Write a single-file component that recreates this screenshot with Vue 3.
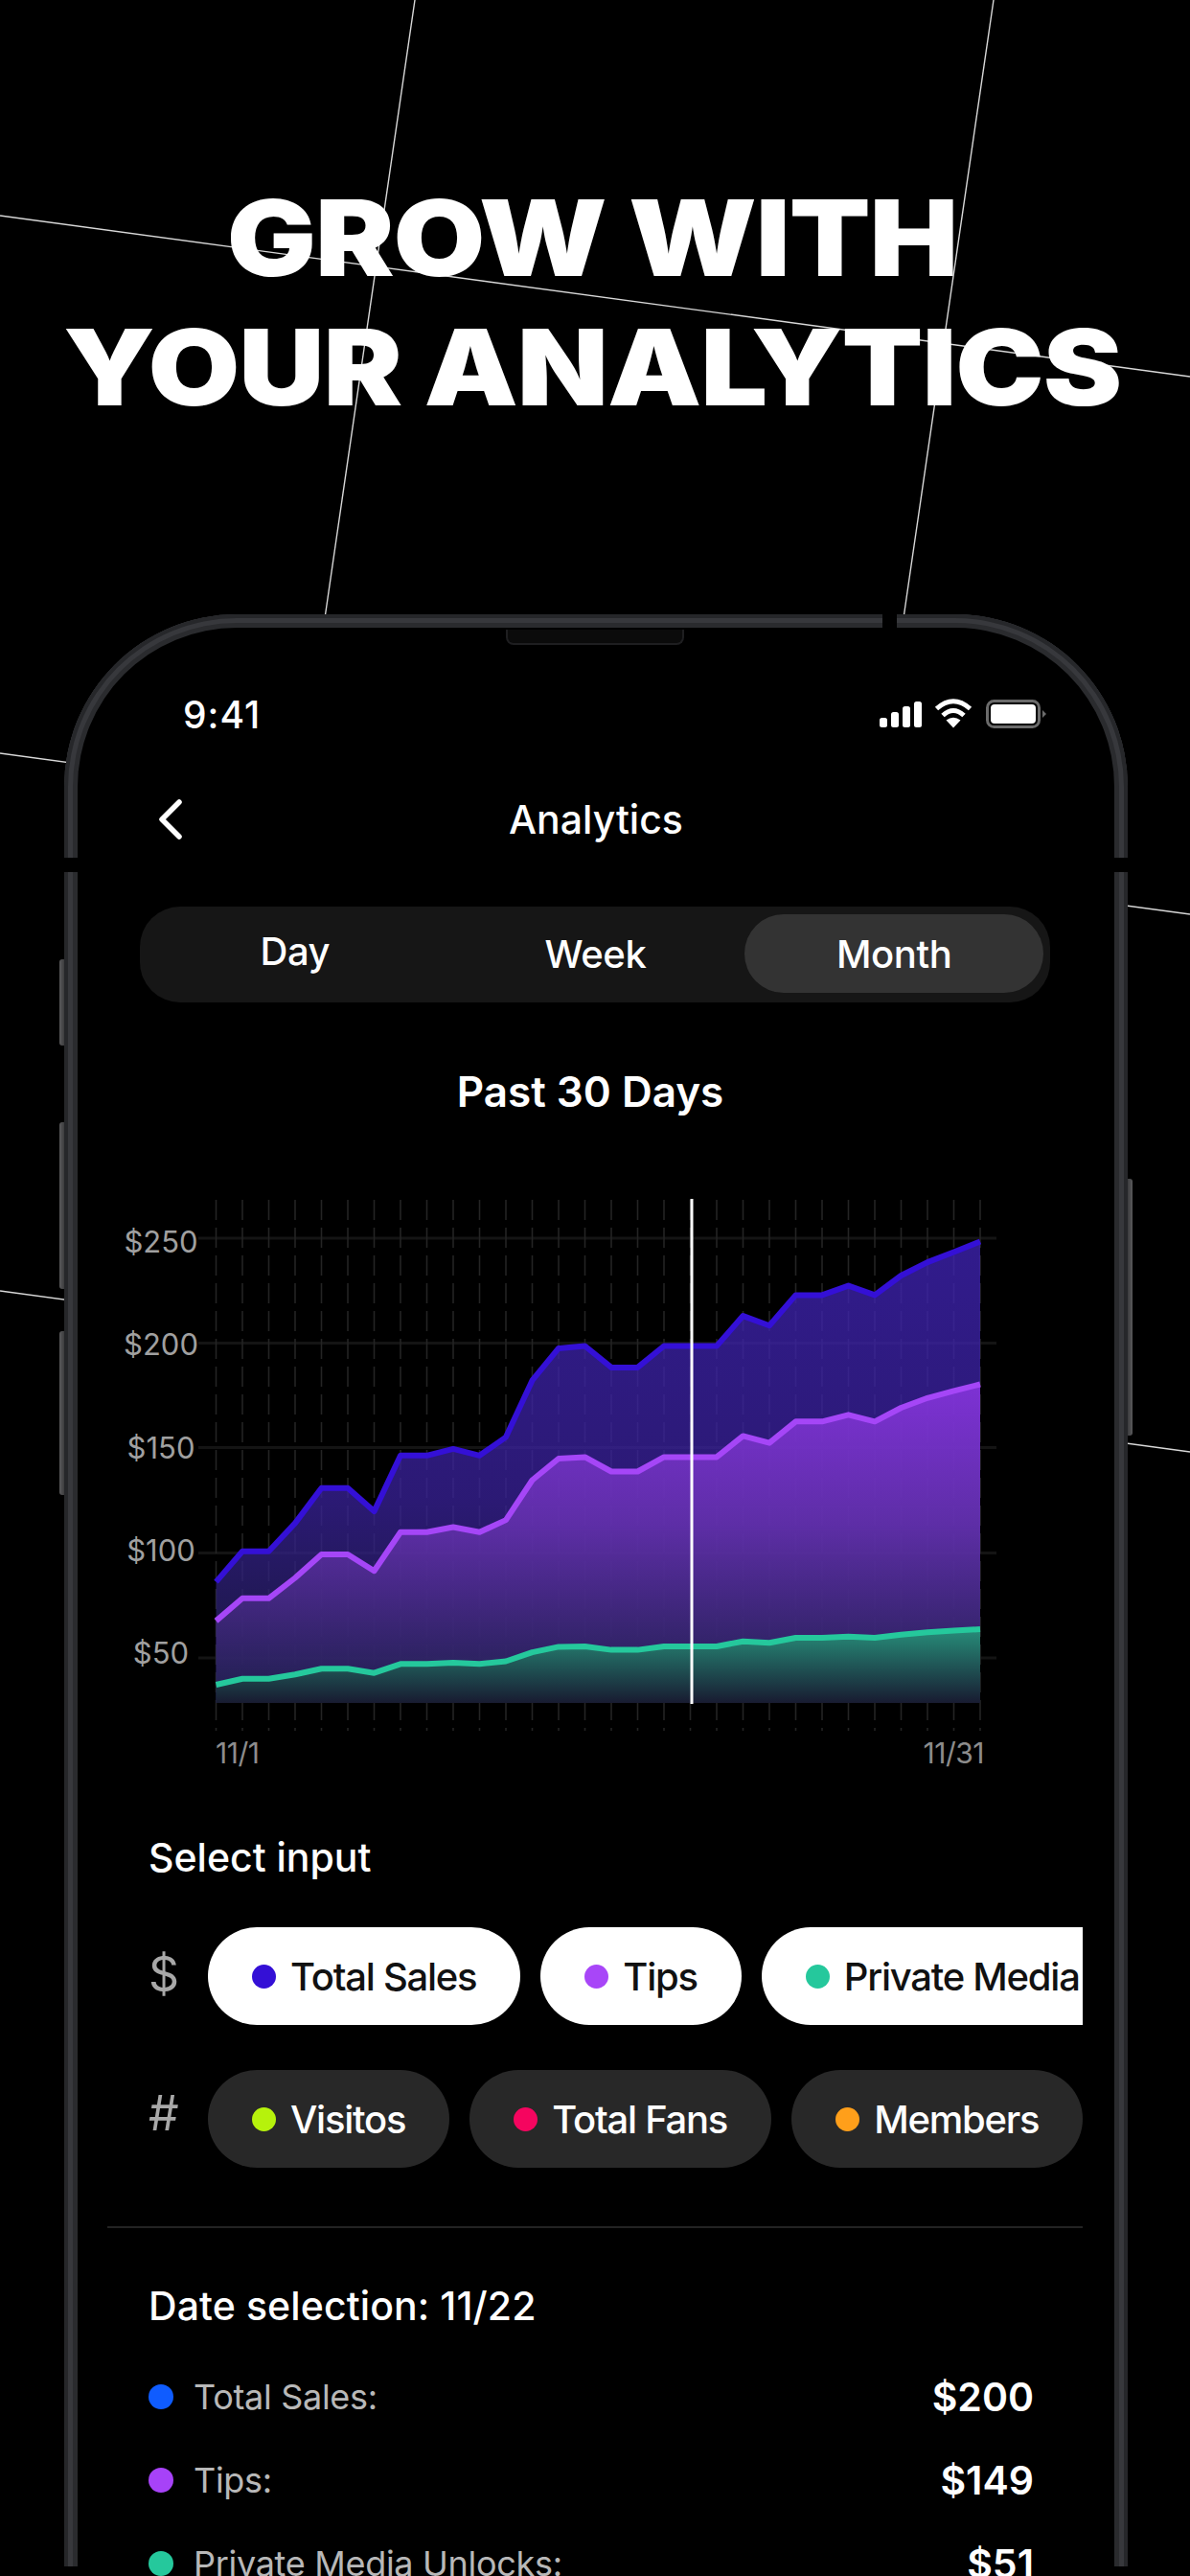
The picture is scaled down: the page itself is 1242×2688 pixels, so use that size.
<template>
  <div class="page">
    <svg class="bg-lines" width="1242" height="2688" viewBox="0 0 1242 2688">
      <line x1="433" y1="0" x2="339" y2="645" />
      <line x1="1037" y1="0" x2="943" y2="645" />
      <line x1="0" y1="225" x2="1242" y2="393" />
      <line x1="0" y1="786" x2="1242" y2="954" />
      <line x1="0" y1="1347" x2="1242" y2="1515" />
    </svg>

    <h1 class="headline"><span class="headline-text">GROW WITH<br />YOUR ANALYTICS</span></h1>

    <div class="phone">
      <span class="side-btn left b1"></span>
      <span class="side-btn left b2"></span>
      <span class="side-btn left b3"></span>
      <span class="side-btn right b4"></span>
      <span class="gap gap-top"></span>
      <span class="gap gap-l"></span>
      <span class="gap gap-r"></span>
      <span class="gap gap-bl"></span>
      <span class="gap gap-br"></span>
      <span class="speaker"></span>

      <div class="status">
        <span class="time">9:41</span>
        <svg width="180" height="40" viewBox="915 725 180 40">
          <rect x="918" y="749" width="8" height="10" rx="2.5" fill="#fff" />
          <rect x="930" y="743" width="8" height="16" rx="2.5" fill="#fff" />
          <rect x="942" y="737" width="8" height="22" rx="2.5" fill="#fff" />
          <rect x="954" y="732" width="8" height="27" rx="2.5" fill="#fff" />
          <path d="M977.5 739.5Q995 724 1012.5 739.5" fill="none" stroke="#fff" stroke-width="5" />
          <path d="M984 746.5Q995 736.5 1006 746.5" fill="none" stroke="#fff" stroke-width="5" />
          <path d="M995 759.5L987.5 751.5Q995 746 1002.5 751.5Z" fill="#fff" />
          <rect x="1030.5" y="731.5" width="54" height="27" rx="7" fill="none" stroke="#6b6b6b" stroke-width="3" />
          <rect x="1034" y="735" width="47" height="20" rx="4" fill="#fff" />
          <path d="M1088 741L1092 745L1088 749Z" fill="#6b6b6b" />
        </svg>
      </div>

      <div class="nav">
        <svg class="back" width="30" height="44" viewBox="0 0 30 44">
          <path d="M23 4L5 22L23 40" fill="none" stroke="#fff" stroke-width="5.5" stroke-linecap="round" stroke-linejoin="round" />
        </svg>
        <span class="nav-title">Analytics</span>
      </div>

      <div class="segment">
        <div
          v-for="tab in tabs"
          :key="tab"
          class="segment-item"
          :class="{ active: tab === 'Month', raised: tab === 'Day' }"
        >{{ tab }}</div>
      </div>

      <div class="period">Past 30 Days</div>

      <svg class="chart" width="930" height="610" viewBox="120 1240 930 610">
        <defs>
          <linearGradient id="blueFill" gradientUnits="userSpaceOnUse" x1="0" y1="1300" x2="0" y2="1777">
            <stop offset="0" stop-color="#3f23b4" stop-opacity="0.78" />
            <stop offset="0.55" stop-color="#3a229c" stop-opacity="0.75" />
            <stop offset="1" stop-color="#20204e" stop-opacity="0.75" />
          </linearGradient>
          <linearGradient id="purpleFill" gradientUnits="userSpaceOnUse" x1="0" y1="1440" x2="0" y2="1777">
            <stop offset="0" stop-color="#8e36e6" stop-opacity="0.84" />
            <stop offset="0.45" stop-color="#6a33b4" stop-opacity="0.8" />
            <stop offset="1" stop-color="#1f2050" stop-opacity="0.8" />
          </linearGradient>
          <linearGradient id="greenFill" gradientUnits="userSpaceOnUse" x1="0" y1="1700" x2="0" y2="1777">
            <stop offset="0" stop-color="#26947a" stop-opacity="0.94" />
            <stop offset="1" stop-color="#181b30" stop-opacity="0.96" />
          </linearGradient>
        </defs>

        <line v-for="y in gridY" :key="y" class="grid-h" x1="207" :y1="y" x2="1040" :y2="y" />
        <line v-for="x in gridX" :key="x" class="grid-v" :x1="x" y1="1252" :x2="x" y2="1806" />

        <path :d="bluePaths.area" fill="url(#blueFill)" />
        <path :d="purplePaths.area" fill="url(#purpleFill)" />
        <path :d="greenPaths.area" fill="url(#greenFill)" />
        <path :d="bluePaths.line" class="series" stroke="#3410d6" />
        <path :d="purplePaths.line" class="series" stroke="#a546f7" />
        <path :d="greenPaths.line" class="series" stroke="#25c89c" />

        <line class="cursor" x1="722" y1="1251" x2="722" y2="1778" />

        <text v-for="t in yLabels" :key="t.label" class="axis" x="168" :y="t.y" text-anchor="middle">{{ t.label }}</text>
        <text class="axis date" x="225" y="1840">11/1</text>
        <text class="axis date" x="1027" y="1840" text-anchor="end">11/31</text>
      </svg>

      <div class="section-title select-title">Select input</div>

      <div class="input-row">
        <span class="unit">$</span>
        <div class="pills">
          <div v-for="p in moneyPills" :key="p.name" class="pill on">
            <i class="dot" :style="{ background: p.color }"></i>{{ p.name }}
          </div>
        </div>
      </div>
      <div class="input-row second">
        <span class="unit hash">#</span>
        <div class="pills">
          <div v-for="p in countPills" :key="p.name" class="pill">
            <i class="dot" :style="{ background: p.color }"></i>{{ p.name }}
          </div>
        </div>
      </div>

      <div class="divider"></div>

      <div class="section-title date-title">Date selection: 11/22</div>
      <div class="stats">
        <div v-for="s in stats" :key="s.name" class="stat">
          <i class="stat-dot" :style="{ background: s.color }"></i>
          <span class="stat-name">{{ s.name }}</span>
          <span class="stat-value">{{ s.value }}</span>
        </div>
      </div>
    </div>
  </div>
</template>

<script setup>
const tabs = ['Day', 'Week', 'Month']

const blue = [1055, 977, 977, 905, 815, 815, 875, 732, 732, 715, 732, 685, 540, 458, 452, 507, 507, 452, 452, 452, 375, 400, 322, 322, 298, 322, 272, 238, 212, 185]
const purple = [1155, 1097, 1097, 1045, 985, 985, 1027, 928, 928, 915, 928, 897, 795, 740, 736, 773, 773, 736, 736, 736, 682, 700, 645, 645, 628, 645, 610, 585, 567, 550]
const green = [1318, 1303, 1303, 1292, 1277, 1277, 1288, 1265, 1265, 1262, 1265, 1258, 1235, 1221, 1220, 1229, 1229, 1220, 1220, 1220, 1207, 1211, 1198, 1198, 1195, 1198, 1190, 1184, 1180, 1176]

const x0 = 225.5
const step = 27.5
const floor = 1777

const toPaths = (values) => {
  const pts = values.map((v, i) => `${(x0 + i * step).toFixed(1)} ${(1220 + v / 2.45).toFixed(1)}`)
  const line = 'M' + pts.join('L')
  const xEnd = x0 + (values.length - 1) * step
  return { line, area: `${line}L${xEnd} ${floor}L${x0} ${floor}Z` }
}

const bluePaths = toPaths(blue)
const purplePaths = toPaths(purple)
const greenPaths = toPaths(green)

const gridX = Array.from({ length: 30 }, (_, i) => x0 + i * step)
const gridY = [1292, 1401.5, 1510.5, 1620.5, 1730]

const yLabels = [
  { label: '$250', y: 1307 },
  { label: '$200', y: 1414 },
  { label: '$150', y: 1522 },
  { label: '$100', y: 1629 },
  { label: '$50', y: 1736 }
]

const moneyPills = [
  { name: 'Total Sales', color: '#3410d6' },
  { name: 'Tips', color: '#a846f8' },
  { name: 'Private Media Unlocks', color: '#25c89c' }
]

const countPills = [
  { name: 'Visitos', color: '#b6f20c' },
  { name: 'Total Fans', color: '#f5055f' },
  { name: 'Members', color: '#ff9f1a' }
]

const stats = [
  { name: 'Total Sales:', value: '$200', color: '#0f5cff' },
  { name: 'Tips:', value: '$149', color: '#a742f8' },
  { name: 'Private Media Unlocks:', value: '$51', color: '#25c89c' }
]
</script>

<style>
html, body {
  background: #000;
}
</style>

<style scoped>
.page {
  position: relative;
  width: 1242px;
  height: 2688px;
  overflow: hidden;
  background: #000;
  color: #fff;
  font-family: Inter, "Liberation Sans", sans-serif;
}
.bg-lines {
  position: absolute;
  left: 0;
  top: 0;
}
.bg-lines line {
  stroke: #d8d8d8;
  stroke-width: 1.4;
}
.headline {
  position: relative;
  margin: 0;
  padding: 181px 6px 0 0;
  font-size: 110px;
  line-height: 135px;
  font-weight: 900;
  text-align: center;
  letter-spacing: -1px;
}
.headline-text {
  display: block;
  transform: scaleX(1.125);
}

.phone {
  position: relative;
  margin: 190px 0 0 67px;
  width: 1110px;
  height: 2200px;
  background: #000;
  border-radius: 180px 180px 0 0;
  box-shadow: inset 0 0 0 4px #26272a, inset 0 0 0 9px #37383c, inset 0 0 0 14px #2a2b2e;
}
.side-btn {
  position: absolute;
  width: 5px;
  background: linear-gradient(90deg, #5a5a5c, #3c3c3e);
}
.side-btn.left {
  left: -5px;
  border-radius: 3px 0 0 3px;
}
.side-btn.right {
  right: -5px;
  transform: scaleX(-1);
  border-radius: 3px 0 0 3px;
}
.b1 { top: 360px; height: 90px; }
.b2 { top: 530px; height: 174px; }
.b3 { top: 748px; height: 171px; }
.b4 { top: 589px; height: 268px; }

.gap {
  position: absolute;
  background: #000;
}
.gap-top { left: 854px; top: -1px; width: 15px; height: 16px; }
.gap-l { left: -1px; top: 254px; width: 16px; height: 15px; }
.gap-r { right: -1px; top: 254px; width: 16px; height: 15px; }
.gap-bl { left: -1px; top: 2037px; width: 16px; height: 20px; }
.gap-br { right: -1px; top: 2037px; width: 16px; height: 20px; }
.speaker {
  position: absolute;
  left: 461px;
  top: 16px;
  width: 186px;
  height: 16px;
  box-sizing: border-box;
  background: #0b0b0b;
  border: 2px solid #1e1e20;
  border-top: 0;
  border-radius: 0 0 8px 8px;
}

.status {
  display: flex;
  align-items: center;
  justify-content: space-between;
  height: 40px;
  padding: 84px 82px 0 124px;
}
.time {
  font-size: 39px;
  font-weight: 500;
  letter-spacing: 1px;
}
.nav {
  position: relative;
  display: flex;
  align-items: center;
  justify-content: center;
  height: 60px;
  margin-top: 60px;
}
.back {
  position: absolute;
  left: 97px;
  top: 8px;
}
.nav-title {
  font-size: 41px;
  font-weight: 500;
}
.segment {
  display: grid;
  grid-template-columns: 1fr 1fr 1fr;
  box-sizing: border-box;
  width: 950px;
  height: 100px;
  margin: 61px 0 0 79px;
  padding: 8px 7px 10px 8px;
  background: #161616;
  border-radius: 42px;
}
.segment-item {
  display: flex;
  align-items: center;
  justify-content: center;
  font-size: 40px;
  font-weight: 450;
  letter-spacing: -0.4px;
  border-radius: 41px;
}
.segment-item.raised {
  padding: 0 4px 6px 0;
}
.segment-item.active {
  background: #333;
}
.period {
  margin-top: 65px;
  padding-right: 12px;
  font-size: 44px;
  line-height: 56px;
  font-weight: 600;
  text-align: center;
}

.chart {
  display: block;
  margin: 73px 0 0 53px;
}
.grid-h {
  stroke: #141414;
  stroke-width: 3;
}
.grid-v {
  stroke: #242424;
  stroke-width: 1.6;
  stroke-dasharray: 21 8;
}
.series {
  fill: none;
  stroke-width: 6;
  stroke-linejoin: round;
}
.cursor {
  stroke: #fff;
  stroke-width: 3;
}
.axis {
  fill: #a0a0a0;
  font-size: 31px;
}
.axis.date {
  fill: #8c8c8c;
  font-size: 30px;
  letter-spacing: -0.5px;
}

.section-title {
  margin-left: 88px;
  font-size: 41px;
  line-height: 50px;
  font-weight: 500;
}
.select-title {
  margin-top: 63px;
}
.input-row {
  display: flex;
  align-items: center;
  width: 975px;
  height: 102px;
  margin: 48px 0 0 88px;
}
.input-row.second {
  margin-top: 47px;
}
.unit {
  flex: 0 0 62px;
  padding-bottom: 4px;
  font-size: 50px;
  color: #a8a8a8;
}
.unit.hash {
  padding-bottom: 12px;
}
.pills {
  display: flex;
  gap: 21px;
  height: 102px;
  overflow: hidden;
}
.pill {
  display: flex;
  flex: 0 0 auto;
  align-items: center;
  gap: 15px;
  padding: 0 46px;
  font-size: 40px;
  font-weight: 450;
  letter-spacing: -1.25px;
  white-space: nowrap;
  background: #282828;
  border-radius: 51px;
}
.pill.on {
  background: #fff;
  color: #111;
}
.dot {
  width: 25px;
  height: 25px;
  border-radius: 50%;
}
.divider {
  width: 1018px;
  height: 2px;
  margin: 61px 0 0 45px;
  background: #232323;
}
.date-title {
  margin-top: 56px;
  letter-spacing: 0.1px;
}
.stats {
  width: 924px;
  margin: 26px 0 0 88px;
}
.stat {
  display: flex;
  align-items: center;
  height: 87px;
}
.stat-dot {
  flex: 0 0 26px;
  height: 26px;
  margin-right: 21px;
  border-radius: 50%;
}
.stat-name {
  flex: 1;
  font-size: 36px;
  letter-spacing: -0.3px;
  color: #b8b8b8;
}
.stat-value {
  font-size: 41px;
  font-weight: 600;
}
</style>
